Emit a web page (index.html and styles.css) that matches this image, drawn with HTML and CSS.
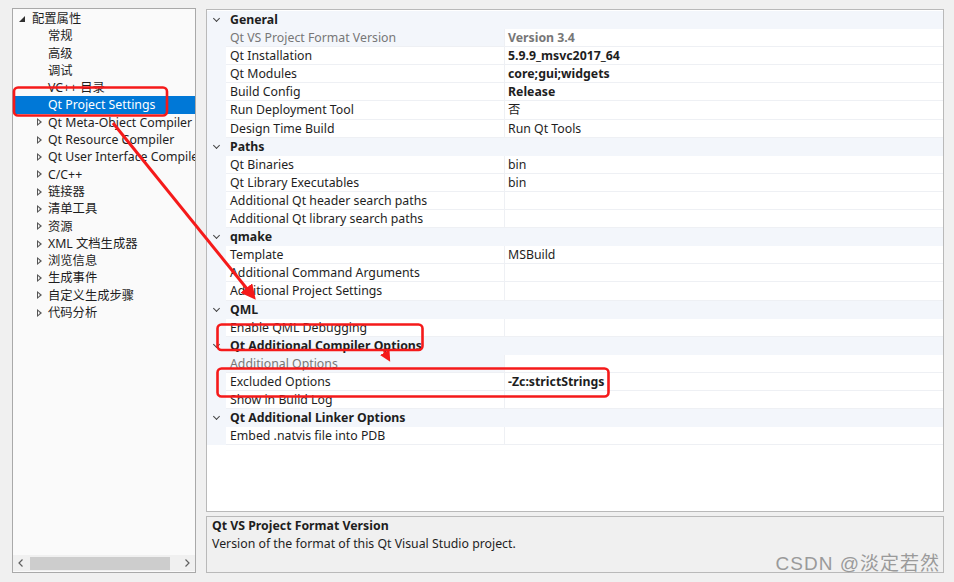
FILE: index.html
```html
<!DOCTYPE html>
<html lang="zh-CN">
<head>
    <meta charset="UTF-8">
    <title>Qt Project Settings</title>
    <link rel="stylesheet" href="styles.css">
</head>
<body>

<div class="window">
    <div class="tree-panel">
        <div class="tree">
            <div class="node root"><span class="exp-open"></span>配置属性</div>
            <div class="node leaf">常规</div>
            <div class="node leaf">高级</div>
            <div class="node leaf">调试</div>
            <div class="node leaf">VC++ 目录</div>
            <div class="node leaf selected">Qt Project Settings</div>
            <div class="node"><span class="exp"></span>Qt Meta-Object Compiler</div>
            <div class="node"><span class="exp"></span>Qt Resource Compiler</div>
            <div class="node"><span class="exp"></span>Qt User Interface Compiler</div>
            <div class="node"><span class="exp"></span>C/C++</div>
            <div class="node"><span class="exp"></span>链接器</div>
            <div class="node"><span class="exp"></span>清单工具</div>
            <div class="node"><span class="exp"></span>资源</div>
            <div class="node"><span class="exp"></span>XML 文档生成器</div>
            <div class="node"><span class="exp"></span>浏览信息</div>
            <div class="node"><span class="exp"></span>生成事件</div>
            <div class="node"><span class="exp"></span>自定义生成步骤</div>
            <div class="node"><span class="exp"></span>代码分析</div>
        </div>
        <div class="hscroll">
            <svg class="arrow-btn" width="16" height="16" viewBox="0 0 16 16"><path d="M9.5 4.5 L6 8 L9.5 11.5" fill="none" stroke="#606060" stroke-width="1.2"/></svg>
            <div class="track"><div class="thumb"></div></div>
            <svg class="arrow-btn" width="16" height="16" viewBox="0 0 16 16"><path d="M6.5 4.5 L10 8 L6.5 11.5" fill="none" stroke="#606060" stroke-width="1.2"/></svg>
        </div>
    </div>

    <div class="right">
        <div class="grid">
            <div class="cat"><span class="chev"></span>General</div>
            <div class="prop readonly"><div class="name">Qt VS Project Format Version</div><div class="value bold">Version 3.4</div></div>
            <div class="prop"><div class="name">Qt Installation</div><div class="value bold">5.9.9_msvc2017_64</div></div>
            <div class="prop"><div class="name">Qt Modules</div><div class="value bold">core;gui;widgets</div></div>
            <div class="prop"><div class="name">Build Config</div><div class="value bold">Release</div></div>
            <div class="prop"><div class="name">Run Deployment Tool</div><div class="value">否</div></div>
            <div class="prop"><div class="name">Design Time Build</div><div class="value">Run Qt Tools</div></div>
            <div class="cat"><span class="chev"></span>Paths</div>
            <div class="prop"><div class="name">Qt Binaries</div><div class="value">bin</div></div>
            <div class="prop"><div class="name">Qt Library Executables</div><div class="value">bin</div></div>
            <div class="prop"><div class="name">Additional Qt header search paths</div><div class="value"></div></div>
            <div class="prop"><div class="name">Additional Qt library search paths</div><div class="value"></div></div>
            <div class="cat"><span class="chev"></span>qmake</div>
            <div class="prop"><div class="name">Template</div><div class="value">MSBuild</div></div>
            <div class="prop"><div class="name">Additional Command Arguments</div><div class="value"></div></div>
            <div class="prop"><div class="name">Additional Project Settings</div><div class="value"></div></div>
            <div class="cat"><span class="chev"></span>QML</div>
            <div class="prop"><div class="name">Enable QML Debugging</div><div class="value"></div></div>
            <div class="cat"><span class="chev"></span>Qt Additional Compiler Options</div>
            <div class="prop readonly"><div class="name">Additional Options</div><div class="value"></div></div>
            <div class="prop"><div class="name">Excluded Options</div><div class="value bold">-Zc:strictStrings</div></div>
            <div class="prop"><div class="name">Show in Build Log</div><div class="value"></div></div>
            <div class="cat"><span class="chev"></span>Qt Additional Linker Options</div>
            <div class="prop"><div class="name">Embed .natvis file into PDB</div><div class="value"></div></div>
        </div>
        <div class="desc">
            <div class="desc-title">Qt VS Project Format Version</div>
            <div class="desc-text">Version of the format of this Qt Visual Studio project.</div>
        </div>
    </div>
</div>

<svg class="marks" width="954" height="582" viewBox="0 0 954 582">
    <defs>
        <marker id="head" markerWidth="5" markerHeight="5" refX="3" refY="2.5" orient="auto" markerUnits="strokeWidth">
            <path d="M0 0 L5 2.5 L0 5 Z" fill="#f51a1a"/>
        </marker>
    </defs>
    <rect x="14" y="87.5" width="153" height="28" rx="4" fill="none" stroke="#f51a1a" stroke-width="2.6"/>
    <line x1="113" y1="123" x2="252" y2="295" stroke="#f51a1a" stroke-width="3" marker-end="url(#head)"/>
    <rect x="217.5" y="324.5" width="205" height="25.5" rx="4" fill="none" stroke="#f51a1a" stroke-width="2.6"/>
    <line x1="384" y1="351" x2="388" y2="358" stroke="#f51a1a" stroke-width="2.2" marker-end="url(#head)"/>
    <rect x="217.5" y="368.5" width="391" height="28" rx="4" fill="none" stroke="#f51a1a" stroke-width="2.6"/>
</svg>

<div class="watermark">CSDN @淡定若然</div>

</body>
</html>
```

FILE: styles.css
```css
body, html {
    margin: 0;
    padding: 0;
    background-color: #f0f0f0;
    font-family: "Noto Sans", "Noto Sans CJK SC", sans-serif;
    font-size: 12.3px;
    color: #1e1e1e;
}

.window {
    width: 954px;
    height: 582px;
    box-sizing: border-box;
    padding: 8px 10px 9px 12px;
    display: flex;
    gap: 10px;
}

/* left tree */
.tree-panel {
    width: 184px;
    box-sizing: border-box;
    border: 1px solid #a9a9a9;
    background-color: #fafafa;
    display: flex;
    flex-direction: column;
    justify-content: space-between;
}

.tree {
    padding-top: 1px;
    overflow: hidden;
}

.node {
    height: 17.3px;
    line-height: 17.3px;
    padding-left: 35px;
    white-space: nowrap;
    position: relative;
}

.node.root {
    padding-left: 6px;
}

.node.leaf {
    padding-left: 35px;
}

.node.selected {
    background-color: #0078d7;
    color: white;
    margin-left: 1px;
    padding-left: 34px;
}

.exp-open, .exp {
    display: inline-block;
    vertical-align: middle;
    margin-top: -2px;
}

.exp-open {
    width: 0;
    height: 0;
    border-left: 6px solid transparent;
    border-bottom: 6px solid #303030;
    margin-right: 7px;
}

.node .exp {
    width: 5px;
    height: 8px;
    margin-left: -11px;
    margin-right: 6px;
    position: relative;
}

.node .exp::before {
    content: "";
    position: absolute;
    left: 0;
    top: 0;
    width: 0;
    height: 0;
    border-top: 4px solid transparent;
    border-bottom: 4px solid transparent;
    border-left: 5px solid #555;
}

.node .exp::after {
    content: "";
    position: absolute;
    left: 1px;
    top: 2px;
    width: 0;
    height: 0;
    border-top: 2px solid transparent;
    border-bottom: 2px solid transparent;
    border-left: 2.5px solid #fafafa;
}

.hscroll {
    height: 16px;
    margin: 0 0 1px 0;
    display: flex;
    align-items: center;
    background-color: #f0f0f0;
}

.arrow-btn {
    flex: none;
}

.track {
    flex: 1;
    padding: 0 1px;
}

.thumb {
    width: 140px;
    height: 13px;
    background-color: #cdcdcd;
}

/* property grid */
.right {
    flex: 1;
    display: flex;
    flex-direction: column;
    gap: 4px;
}

.grid {
    flex: 1;
    border: 1px solid #b9b9b9;
    background-color: white;
    padding-top: 1px;
    margin-top: 1px;
}

.cat {
    height: 18.1px;
    line-height: 18px;
    background-color: #f3f6fb;
    font-weight: bold;
    padding-left: 23px;
    position: relative;
    white-space: nowrap;
}

.chev {
    position: absolute;
    left: 7px;
    top: 5px;
    width: 4px;
    height: 4px;
    border-right: 1.3px solid #444;
    border-bottom: 1.3px solid #444;
    transform: rotate(45deg);
}

.prop {
    height: 18.1px;
    display: flex;
    background-color: #f3f6fb;
    padding-left: 19px;
}

.prop .name, .prop .value {
    background-color: white;
    line-height: 17px;
    height: 17.1px;
    border-bottom: 1px solid #eef0f4;
    white-space: nowrap;
    overflow: hidden;
}

.prop .name {
    width: 274px;
    padding-left: 4px;
    border-right: 1px solid #eef0f4;
}

.prop .value {
    flex: 1;
    padding-left: 3px;
}

.prop.readonly .name {
    background-color: #f3f6fb;
    color: #777;
}

.prop.readonly .value {
    color: #777;
}

.bold {
    font-weight: bold;
}

.desc {
    height: 57px;
    box-sizing: border-box;
    border: 1px solid #b9b9b9;
    background-color: #f0f0f0;
    padding: 0 5px;
    line-height: 18px;
}

.desc-title {
    font-weight: bold;
}

/* annotations drawn over the screenshot */
.marks {
    position: absolute;
    left: 0;
    top: 0;
    pointer-events: none;
}

.watermark {
    position: absolute;
    right: 14px;
    bottom: 7px;
    font-family: "Liberation Sans", "Noto Sans CJK SC", sans-serif;
    font-size: 19px;
    color: #9a9a9a;
    letter-spacing: 1px;
}
```
